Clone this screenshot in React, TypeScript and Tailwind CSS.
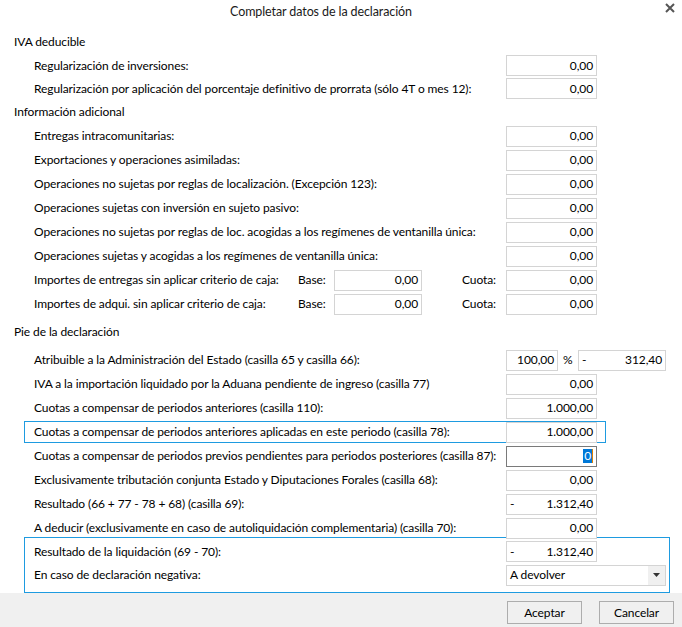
import React from 'react';

const font = { fontFamily: '"Lato", "Liberation Sans", sans-serif' };

function Field({ value, w = 'w-[91px]', dash = false, focused = false }: { value: string; w?: string; dash?: boolean; focused?: boolean }) {
  return (
    <div
      className={`${w} h-[21px] shrink-0 flex items-center justify-between px-[3px] bg-white border ${
        focused ? 'border-[#7a7a7a]' : 'border-[#d4d4d4]'
      }`}
    >
      <span>{dash ? '-' : ''}</span>
      {focused ? (
        <span className="bg-[#0078d7] text-white leading-[14px] px-[1px] border-r border-[#e08000]">{value}</span>
      ) : (
        <span>{value}</span>
      )}
    </div>
  );
}

function Row({ label, h = 'h-[24px]', children }: { label: string; h?: string; children: React.ReactNode }) {
  return (
    <div className={`flex items-center ${h}`}>
      <div className="w-[482px] shrink-0 pl-[10px] whitespace-nowrap">{label}</div>
      {children}
    </div>
  );
}

function Header({ text, className = '' }: { text: string; className?: string }) {
  return <div className={`pl-[14px] flex items-center ${className}`}>{text}</div>;
}

function BaseCuotaRow({ label }: { label: string }) {
  return (
    <div className="flex items-center h-[24px]">
      <div className="w-[274px] shrink-0 pl-[10px] whitespace-nowrap">{label}</div>
      <div className="w-[36px] shrink-0">Base:</div>
      <Field value="0,00" w="w-[88px]" />
      <div className="w-[84px] shrink-0 pl-[40px]">Cuota:</div>
      <Field value="0,00" />
    </div>
  );
}

export default function App() {
  return (
    <div className="w-[682px] h-[627px] bg-white text-[12px] tracking-[-0.1px] text-black overflow-hidden" style={font}>
      {/* Title bar */}
      <div className="relative h-[30px] flex items-start pt-[3px] justify-center text-[12.5px] text-[#1a1a1a] pr-[40px]">
        Completar datos de la declaración
        <svg className="absolute right-[7px] top-[3px]" width="10" height="10" viewBox="0 0 10 10">
          <path d="M1 1 L9 9 M9 1 L1 9" stroke="#555" strokeWidth="2" />
        </svg>
      </div>

      <Header text="IVA deducible" className="h-[24px]" />
      <div className="pl-[24px]">
        <Row h="h-[23px]" label="Regularización de inversiones:"><Field value="0,00" /></Row>
        <Row h="h-[23px]" label="Regularización por aplicación del porcentaje definitivo de prorrata (sólo 4T o mes 12):"><Field value="0,00" /></Row>
      </div>

      <Header text="Información adicional" className="h-[24px]" />
      <div className="pl-[24px]">
        <Row label="Entregas intracomunitarias:"><Field value="0,00" /></Row>
        <Row label="Exportaciones y operaciones asimiladas:"><Field value="0,00" /></Row>
        <Row label="Operaciones no sujetas por reglas de localización. (Excepción 123):"><Field value="0,00" /></Row>
        <Row label="Operaciones sujetas con inversión en sujeto pasivo:"><Field value="0,00" /></Row>
        <Row label="Operaciones no sujetas por reglas de loc. acogidas a los regímenes de ventanilla única:"><Field value="0,00" /></Row>
        <Row label="Operaciones sujetas y acogidas a los regímenes de ventanilla única:"><Field value="0,00" /></Row>
        <BaseCuotaRow label="Importes de entregas sin aplicar criterio de caja:" />
        <BaseCuotaRow label="Importes de adqui. sin aplicar criterio de caja:" />
      </div>

      <Header text="Pie de la declaración" className="h-[32px]" />
      <div className="pl-[24px]">
        <Row label="Atribuible a la Administración del Estado (casilla 65 y casilla 66):">
          <Field value="100,00" w="w-[52px]" />
          <span className="w-[20px] shrink-0 pl-[5px]">%</span>
          <Field value="312,40" w="w-[88px]" dash />
        </Row>
        <Row label="IVA a la importación liquidado por la Aduana pendiente de ingreso (casilla 77)"><Field value="0,00" /></Row>
        <Row label="Cuotas a compensar de periodos anteriores (casilla 110):"><Field value="1.000,00" /></Row>
        <div className="h-[24px] flex items-center">
          <div className="w-[582px] h-[22px] border border-[#1e9be0] flex items-center">
            <div className="w-[481px] shrink-0 pl-[9px] whitespace-nowrap">Cuotas a compensar de periodos anteriores aplicadas en este periodo (casilla 78):</div>
            <Field value="1.000,00" />
          </div>
        </div>
        <Row label="Cuotas a compensar de periodos previos pendientes para periodos posteriores (casilla 87):"><Field value="0" focused /></Row>
        <Row label="Exclusivamente tributación conjunta Estado y Diputaciones Forales (casilla 68):"><Field value="0,00" /></Row>
        <Row label="Resultado (66 + 77 - 78 + 68) (casilla 69):"><Field value="1.312,40" dash /></Row>
        <Row label="A deducir (exclusivamente en caso de autoliquidación complementaria) (casilla 70):"><Field value="0,00" /></Row>
        <div className="w-[646px] border border-[#1e9be0] -mt-[3px] pt-[2px] pb-[5px]">
          <div className="flex items-center h-[23px]">
            <div className="w-[481px] shrink-0 pl-[9px] whitespace-nowrap">Resultado de la liquidación (69 - 70):</div>
            <Field value="1.312,40" dash />
          </div>
          <div className="flex items-center h-[24px]">
            <div className="w-[481px] shrink-0 pl-[9px] whitespace-nowrap">En caso de declaración negativa:</div>
            <div className="w-[160px] h-[21px] flex items-center bg-white border border-[#d4d4d4]">
              <span className="flex-1 pl-[3px]">A devolver</span>
              <span className="w-[17px] h-full bg-[#f0f0f0] flex items-center justify-center">
                <svg width="7" height="4" viewBox="0 0 7 4"><path d="M0 0 H7 L3.5 4 Z" fill="#333" /></svg>
              </span>
            </div>
          </div>
        </div>
      </div>

      {/* Footer */}
      <div className="h-[34px] bg-[#f0f0f0] flex items-start justify-end gap-[17px] pr-[8px] pt-[8px]">
        <button className="w-[75px] h-[23px] border border-[#adadad] bg-[#f0f0f0] tracking-[-0.1px]" style={font}>Aceptar</button>
        <button className="w-[75px] h-[23px] border border-[#adadad] bg-[#f0f0f0] tracking-[-0.1px]" style={font}>Cancelar</button>
      </div>
    </div>
  );
}
